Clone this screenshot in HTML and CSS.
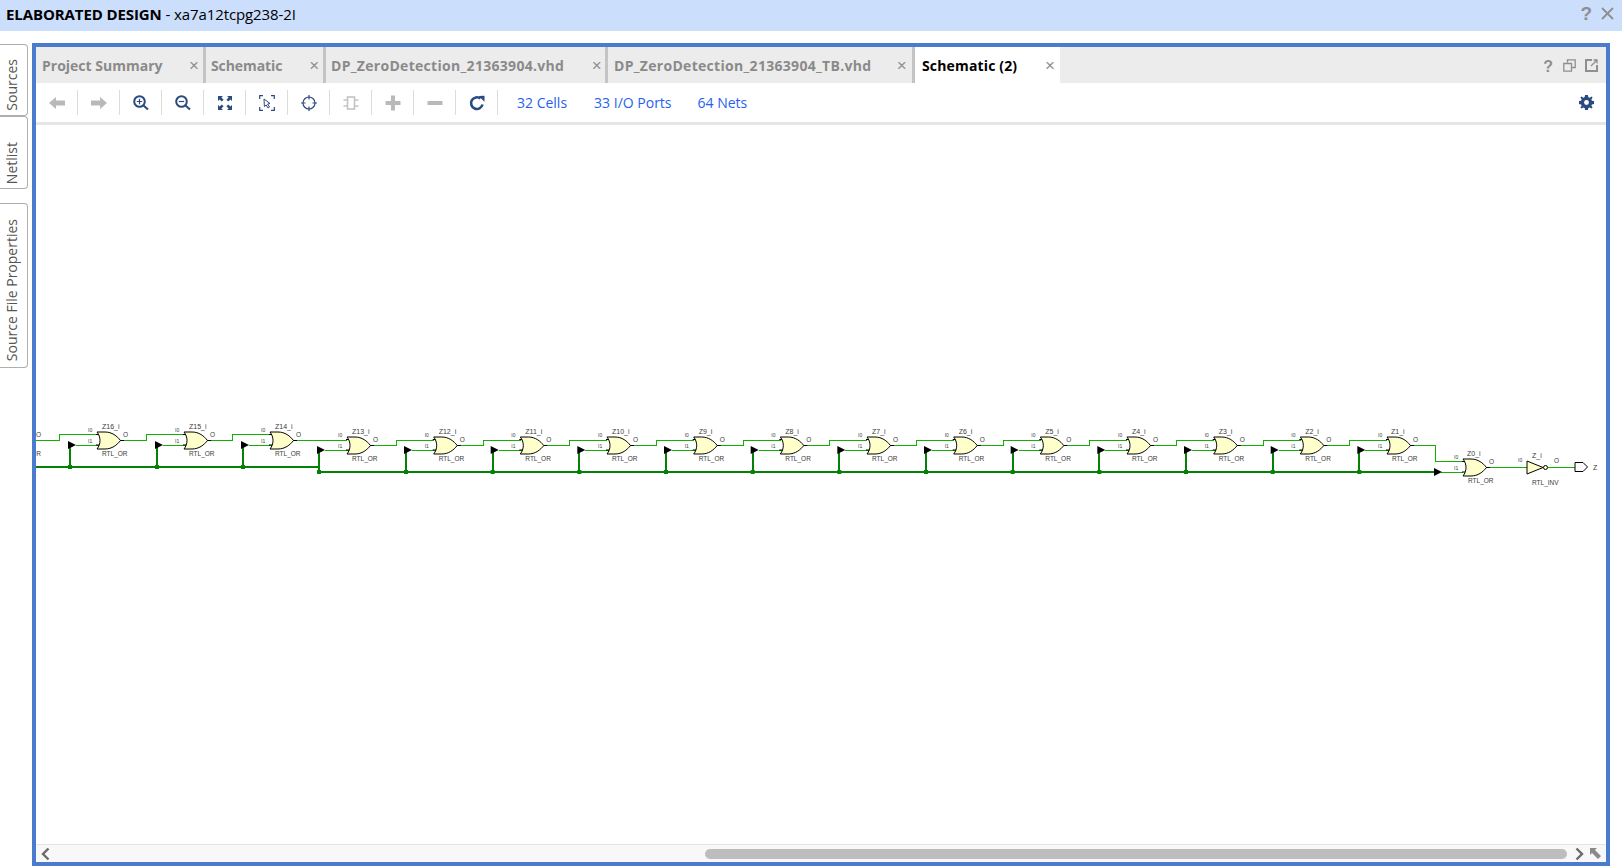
FILE: index.html
```html
<!DOCTYPE html>
<html lang="en">
<head>
<meta charset="utf-8">
<title>Elaborated Design</title>
<link rel="stylesheet" href="styles.css">
</head>
<body>
<svg class="defs" width="0" height="0" aria-hidden="true">
  <defs>
    <g id="orgate">
      <path class="stub" d="M-1 2.5H4M-1 13H4M23 8.5H27"/>
      <path class="gate" d="M0 0H8C15 0 20 4 23.5 8.5C20 13 15 17 8 17H0C4 12 4 5 0 0Z"/>
    </g>
    <g id="tap">
      <path class="bus" d="M0 0V22"/>
      <path class="wire" d="M6 0H30"/>
      <path class="arrow" d="M-2 -4L6 0L-2 4Z"/>
      <rect class="node" x="-2" y="20" width="4" height="4"/>
    </g>
  </defs>
</svg>
<header class="titlebar">
  <div class="title"><b>ELABORATED DESIGN</b> - xa7a12tcpg238-2I</div>
  <div class="title-icons">
    <span class="t-help">?</span>
    <svg width="13" height="13" viewBox="0 0 13 13"><path class="x-big" d="M1 1L12 12M12 1L1 12"/></svg>
  </div>
</header>
<main class="workspace">
  <nav class="side">
    <div class="side-tab st-sources"><span>Sources</span></div>
    <div class="side-tab st-netlist"><span>Netlist</span></div>
    <div class="side-tab st-props"><span>Source File Properties</span></div>
  </nav>
  <section class="panel">
    <div class="tabs">
      <div class="tab t1"><span class="lbl">Project Summary</span><i class="close">×</i></div>
      <div class="tab t2"><span class="lbl">Schematic</span><i class="close">×</i></div>
      <div class="tab t3"><span class="lbl">DP_ZeroDetection_21363904.vhd</span><i class="close">×</i></div>
      <div class="tab t4"><span class="lbl">DP_ZeroDetection_21363904_TB.vhd</span><i class="close">×</i></div>
      <div class="tab active"><span class="lbl">Schematic (2)</span><i class="close">×</i></div>
      <div class="tab-actions">
        <span class="p-help">?</span>
        <svg width="13" height="13" viewBox="0 0 13 13"><path class="ta" d="M4.5 3.5V.8H12.2V8.5H9M.8 4.5H8.5V12.2H.8Z"/></svg>
        <svg width="13" height="13" viewBox="0 0 13 13"><path class="ta2" d="M7 1H1V12H12V6"/><path class="ta" d="M6 7L11.5 1.5M8.5 1H12V4.5"/></svg>
      </div>
    </div>
    <div class="toolbar">
      <button class="tb"><svg width="16" height="14" viewBox="0 0 16 14"><path class="off" d="M0 7L7 1V4.500H16V9.500H7V13Z"/></svg></button>
      <button class="tb"><svg width="16" height="14" viewBox="0 0 16 14"><path class="off" d="M16 7L9 1V4.500H0V9.500H9V13Z"/></svg></button>
      <button class="tb"><svg width="16" height="16" viewBox="0 0 16 16"><circle class="on-s" cx="6.500" cy="6.500" r="5.300"/><path class="on-s thin" d="M3.800 6.500H9.200M6.500 3.800V9.200"/><path class="on-s" d="M10.500 10.500L15 14.500"/></svg></button>
      <button class="tb"><svg width="16" height="16" viewBox="0 0 16 16"><circle class="on-s" cx="6.500" cy="6.500" r="5.300"/><path class="on-s thin" d="M3.800 6.500H9.200"/><path class="on-s" d="M10.500 10.500L15 14.500"/></svg></button>
      <button class="tb"><svg width="16" height="16" viewBox="0 0 16 16"><path class="on" d="M1 1H6L4.400 2.600L6.600 4.800L4.800 6.600L2.600 4.400L1 6ZM15 1V6L13.400 4.400L11.200 6.600L9.400 4.800L11.600 2.600L10 1ZM1 15V10L2.600 11.600L4.800 9.400L6.600 11.200L4.400 13.400L6 15ZM15 15H10L11.600 13.400L9.400 11.200L11.200 9.400L13.400 11.600L15 10Z"/></svg></button>
      <button class="tb"><svg width="16" height="16" viewBox="0 0 16 16"><path class="on-s thin" d="M.7 4V.7H4M12 .7H15.300V4M.7 12V15.300H4M12 15.300H15.300V12"/><path class="cur" d="M5 4L11 8.500L8.600 9L10.500 12L9 13L7.200 10L5.400 11.500Z"/></svg></button>
      <button class="tb"><svg width="16" height="16" viewBox="0 0 16 16"><circle class="on-s thin" cx="8" cy="8" r="6"/><path class="on-s thin" d="M8 0V4.500M8 11.500V16M0 8H4.500M11.500 8H16"/></svg></button>
      <button class="tb"><svg width="16" height="14" viewBox="0 0 16 14"><rect class="off-s" x="4.500" y="1" width="7" height="12"/><path class="off-s" d="M.5 4H4.500M.5 10H4.500M11.500 4H15.500M11.500 10H15.500"/></svg></button>
      <button class="tb"><svg width="16" height="16" viewBox="0 0 16 16"><path class="off" d="M6 0.500H10V6H15.500V10H10V15.500H6V10H.5V6H6Z"/></svg></button>
      <button class="tb"><svg width="16" height="16" viewBox="0 0 16 16"><path class="off" d="M.5 6H15.500V10H.5Z"/></svg></button>
      <button class="tb"><svg width="16" height="16" viewBox="0 0 16 16"><path class="on-r" d="M13.500 9.500A5.800 5.800 0 1 1 11.500 3.600"/><path class="on" d="M9.500 1L15.500 .8V6.800Z"/></svg></button>
      <a class="link l1">32 Cells</a>
      <a class="link l2">33 I/O Ports</a>
      <a class="link l3">64 Nets</a>
      <svg class="gear" width="15" height="15" viewBox="0 0 16 16"><path class="on" fill-rule="evenodd" d="M6.500 0H9.500L10 2.300L11.400 2.900L13.400 1.600L14.500 2.700L13.200 4.700L13.800 6.100L16 6.500V9.500L13.800 10L13.200 11.400L14.500 13.400L13.400 14.500L11.400 13.200L10 13.800L9.500 16H6.500L6 13.800L4.600 13.200L2.600 14.500L1.500 13.400L2.800 11.400L2.200 10L0 9.500V6.500L2.200 6L2.800 4.600L1.500 2.700L2.600 1.600L4.600 2.800L6 2.200ZM8 5.400A2.600 2.600 0 1 0 8 10.600A2.600 2.600 0 1 0 8 5.400Z"/></svg>
    </div>
    <div class="canvas">
      <svg class="schematic" width="1570" height="719" viewBox="36 125 1570 719">
        <path class="wire" d="M36 440H59V434.5H97M120 440H146V434.500H184M206.500 440H232V434.500H270M293 440H347M370 445H396V440H434M457 445H483V440H521M543.500 445H569V440H607M630 445H656V440H694M717 445H743V440H781M803.500 445H829V440H867M890 445H916V440H954M977 445H1003V440H1041M1063.500 445H1089V440H1127M1150 445H1176V440H1214M1237 445H1263V440H1301M1323.500 445H1349V440H1387M1410 445H1435V461H1463M1441 472H1463M1487 467H1527M1548 467H1575"/>
        <path class="bus" d="M36 467H319V472H1436"/>
        <use href="#tap" x="70" y="445"/><use href="#tap" x="157" y="445"/><use href="#tap" x="243" y="445"/>
        <use href="#tap" x="319" y="450"/><use href="#tap" x="406" y="450"/><use href="#tap" x="492.700" y="450"/><use href="#tap" x="579.300" y="450"/><use href="#tap" x="666" y="450"/><use href="#tap" x="752.700" y="450"/><use href="#tap" x="839.300" y="450"/><use href="#tap" x="926" y="450"/><use href="#tap" x="1012.700" y="450"/><use href="#tap" x="1099.300" y="450"/><use href="#tap" x="1186" y="450"/><use href="#tap" x="1272.700" y="450"/><use href="#tap" x="1359.300" y="450"/>
        <path class="arrow" d="M1434 468L1442 472L1434 476Z"/>
        <g class="ltext"><text class="o" x="36" y="437">O</text><text class="rtl" x="15.300" y="456">RTL_OR</text></g>

        <g class="ltext" transform="translate(97 432)"><use href="#orgate"/><text class="nm" x="5" y="-3">Z16_i</text><text class="rtl" x="5" y="24">RTL_OR</text><text class="pin" x="-9" y="0">I0</text><text class="pin" x="-9" y="11">I1</text><text class="o" x="26" y="5">O</text></g>
        <g class="ltext" transform="translate(184 432)"><use href="#orgate"/><text class="nm" x="5" y="-3">Z15_i</text><text class="rtl" x="5" y="24">RTL_OR</text><text class="pin" x="-9" y="0">I0</text><text class="pin" x="-9" y="11">I1</text><text class="o" x="26" y="5">O</text></g>
        <g class="ltext" transform="translate(270 432)"><use href="#orgate"/><text class="nm" x="5" y="-3">Z14_i</text><text class="rtl" x="5" y="24">RTL_OR</text><text class="pin" x="-9" y="0">I0</text><text class="pin" x="-9" y="11">I1</text><text class="o" x="26" y="5">O</text></g>
        <g class="ltext" transform="translate(347 437)"><use href="#orgate"/><text class="nm" x="5" y="-3">Z13_i</text><text class="rtl" x="5" y="24">RTL_OR</text><text class="pin" x="-9" y="0">I0</text><text class="pin" x="-9" y="11">I1</text><text class="o" x="26" y="5">O</text></g>
        <g class="ltext" transform="translate(433.700 437)"><use href="#orgate"/><text class="nm" x="5" y="-3">Z12_i</text><text class="rtl" x="5" y="24">RTL_OR</text><text class="pin" x="-9" y="0">I0</text><text class="pin" x="-9" y="11">I1</text><text class="o" x="26" y="5">O</text></g>
        <g class="ltext" transform="translate(520.300 437)"><use href="#orgate"/><text class="nm" x="5" y="-3">Z11_i</text><text class="rtl" x="5" y="24">RTL_OR</text><text class="pin" x="-9" y="0">I0</text><text class="pin" x="-9" y="11">I1</text><text class="o" x="26" y="5">O</text></g>
        <g class="ltext" transform="translate(607 437)"><use href="#orgate"/><text class="nm" x="5" y="-3">Z10_i</text><text class="rtl" x="5" y="24">RTL_OR</text><text class="pin" x="-9" y="0">I0</text><text class="pin" x="-9" y="11">I1</text><text class="o" x="26" y="5">O</text></g>
        <g class="ltext" transform="translate(693.700 437)"><use href="#orgate"/><text class="nm" x="5" y="-3">Z9_i</text><text class="rtl" x="5" y="24">RTL_OR</text><text class="pin" x="-9" y="0">I0</text><text class="pin" x="-9" y="11">I1</text><text class="o" x="26" y="5">O</text></g>
        <g class="ltext" transform="translate(780.300 437)"><use href="#orgate"/><text class="nm" x="5" y="-3">Z8_i</text><text class="rtl" x="5" y="24">RTL_OR</text><text class="pin" x="-9" y="0">I0</text><text class="pin" x="-9" y="11">I1</text><text class="o" x="26" y="5">O</text></g>
        <g class="ltext" transform="translate(867 437)"><use href="#orgate"/><text class="nm" x="5" y="-3">Z7_i</text><text class="rtl" x="5" y="24">RTL_OR</text><text class="pin" x="-9" y="0">I0</text><text class="pin" x="-9" y="11">I1</text><text class="o" x="26" y="5">O</text></g>
        <g class="ltext" transform="translate(953.700 437)"><use href="#orgate"/><text class="nm" x="5" y="-3">Z6_i</text><text class="rtl" x="5" y="24">RTL_OR</text><text class="pin" x="-9" y="0">I0</text><text class="pin" x="-9" y="11">I1</text><text class="o" x="26" y="5">O</text></g>
        <g class="ltext" transform="translate(1040.300 437)"><use href="#orgate"/><text class="nm" x="5" y="-3">Z5_i</text><text class="rtl" x="5" y="24">RTL_OR</text><text class="pin" x="-9" y="0">I0</text><text class="pin" x="-9" y="11">I1</text><text class="o" x="26" y="5">O</text></g>
        <g class="ltext" transform="translate(1127 437)"><use href="#orgate"/><text class="nm" x="5" y="-3">Z4_i</text><text class="rtl" x="5" y="24">RTL_OR</text><text class="pin" x="-9" y="0">I0</text><text class="pin" x="-9" y="11">I1</text><text class="o" x="26" y="5">O</text></g>
        <g class="ltext" transform="translate(1213.700 437)"><use href="#orgate"/><text class="nm" x="5" y="-3">Z3_i</text><text class="rtl" x="5" y="24">RTL_OR</text><text class="pin" x="-9" y="0">I0</text><text class="pin" x="-9" y="11">I1</text><text class="o" x="26" y="5">O</text></g>
        <g class="ltext" transform="translate(1300.300 437)"><use href="#orgate"/><text class="nm" x="5" y="-3">Z2_i</text><text class="rtl" x="5" y="24">RTL_OR</text><text class="pin" x="-9" y="0">I0</text><text class="pin" x="-9" y="11">I1</text><text class="o" x="26" y="5">O</text></g>
        <g class="ltext" transform="translate(1387 437)"><use href="#orgate"/><text class="nm" x="4" y="-3">Z1_i</text><text class="rtl" x="5" y="24">RTL_OR</text><text class="pin" x="-9" y="0">I0</text><text class="pin" x="-9" y="11">I1</text><text class="o" x="26" y="5">O</text></g>
        <g class="ltext" transform="translate(1463 459)"><use href="#orgate"/><text class="nm" x="4" y="-3">Z0_i</text><text class="rtl" x="5" y="24">RTL_OR</text><text class="pin" x="-9" y="0">I0</text><text class="pin" x="-9" y="11">I1</text><text class="o" x="26" y="5">O</text></g>
        <g class="ltext" transform="translate(1527 461)">
          <path class="gate" d="M0 0L16 6.500L0 13Z"/><circle class="gate" cx="18.500" cy="6.500" r="2"/>
          <text class="nm" x="5" y="-3">Z_i</text><text class="rtl" x="5" y="24">RTL_INV</text><text class="pin" x="-9" y="1">I0</text><text class="o" x="27" y="2">O</text>
        </g>
        <path class="port" d="M1575 462.500H1583L1587.500 467L1583 471.500H1575Z"/>
        <text class="ltext nm" x="1593" y="470">Z</text>
      </svg>
    </div>
    <div class="hscroll">
      <svg class="arrow-l" width="9" height="14" viewBox="0 0 9 14"><path class="sc" d="M7.500 1.500L2 7L7.500 12.500"/></svg>
      <div class="track"><div class="thumb"></div></div>
      <svg class="arrow-r" width="9" height="14" viewBox="0 0 9 14"><path class="sc" d="M1.500 1.500L7 7L1.500 12.500"/></svg>
      <svg class="corner" width="11" height="11" viewBox="0 0 11 11"><path class="cn" d="M0 0H7L5 2L11 8L8 11L2 5L0 7Z"/></svg>
    </div>
  </section>
</main>
</body>
</html>
```
FILE: styles.css
```css
* { box-sizing: border-box; }
html, body { margin: 0; height: 100%; overflow: hidden; background: #fff; }
body {
  display: flex;
  flex-direction: column;
  height: 866px;
  font-family: "Open Sans", "Noto Sans", sans-serif;
  color: #000;
}
.defs { position: absolute; }

/* title bar */
.titlebar {
  height: 31px;
  flex: none;
  background: #cbdefc;
  display: flex;
  align-items: center;
  justify-content: space-between;
  padding: 0 8px 4px 6px;
}
.title { font-size: 15px; letter-spacing: -0.1px; }
.title b { font-weight: 700; }
.title-icons { display: flex; align-items: center; gap: 9px; }
.t-help { font: 700 19px/1 "Liberation Sans", sans-serif; color: #8f8f8f; }
.x-big { stroke: #8f8f8f; stroke-width: 1.8; fill: none; }

/* layout */
.workspace { flex: 1; display: flex; padding-top: 12px; min-height: 0; }
.side { width: 32px; flex: none; display: flex; flex-direction: column; padding-top: 1px; }
.side-tab {
  width: 28px;
  border: 1px solid #aeaeae;
  border-left: 0;
  border-radius: 0 4px 4px 0;
  background: #fff;
  display: flex;
  justify-content: center;
  font-size: 14px;
  color: #555;
}
.side-tab span { writing-mode: vertical-rl; transform: rotate(180deg); white-space: nowrap; }
.st-sources { height: 72px; align-items: flex-end; padding: 0 4px 4px 0; }
.st-netlist { height: 73px; align-items: flex-end; padding: 0 4px 4px 0; }
.st-props { height: 165px; margin-top: 14px; align-items: flex-end; padding: 0 4px 6px 0; }

.panel {
  width: 1578px;
  border: 4px solid #4a7bcd;
  display: flex;
  flex-direction: column;
  min-height: 0;
}

/* tabs */
.tabs { height: 36px; flex: none; display: flex; background: #ececec; align-items: stretch; }
.tab {
  display: flex;
  align-items: center;
  justify-content: space-between;
  border-right: 3px solid #c4c4c4;
  font-size: 14px;
  font-weight: 700;
  color: #8a8a8a;
  white-space: nowrap;
}
.lbl { display: block; }
.close { font: 400 17px/1 "Liberation Sans", sans-serif; color: #8f8f8f; }
.t1 { width: 170px; padding: 0 4px 0 6px; }
.t2 { width: 120px; padding: 0 4px 0 5px; letter-spacing: -0.1px; }
.t3 { width: 282px; padding: 0 3px 0 5px; letter-spacing: 0.3px; }
.t4 { width: 307px; padding: 0 5px 0 6px; letter-spacing: 0.3px; }
.active { width: 145px; padding: 0 5px 0 7px; background: #fff; color: #000; border-right: 0; letter-spacing: 0.15px; }
.tab-actions { margin-left: auto; display: flex; align-items: center; gap: 9px; padding-right: 8px; }
.p-help { font: 700 16px/1 "Liberation Sans", sans-serif; color: #8f8f8f; padding-top: 4px; margin-right: 1px; }
.ta { stroke: #8f8f8f; stroke-width: 1.3; fill: none; }
.ta2 { stroke: #8f8f8f; stroke-width: 2; fill: none; }

/* toolbar */
.toolbar {
  height: 42px;
  flex: none;
  display: flex;
  align-items: center;
  border-bottom: 3px solid #e6e6e6;
}
.tb {
  width: 42px;
  height: 25px;
  flex: none;
  padding: 0;
  background: none;
  border: 0;
  border-right: 1px solid #dcdcdc;
  display: flex;
  align-items: center;
  justify-content: center;
}
.off { fill: #b9b9b9; }
.off-s { fill: none; stroke: #c4c4c4; stroke-width: 1.6; }
.on { fill: #2b4a80; }
.on-s { fill: none; stroke: #2b4a80; stroke-width: 2; }
.on-s.thin { stroke-width: 1.2; }
.on-r { fill: none; stroke: #2b4a80; stroke-width: 2.6; }
.cur { fill: #fff; stroke: #2b4a80; stroke-width: 1; }
.link { font-size: 14px; color: #1f62f0; white-space: nowrap; }
.l1 { margin-left: 19px; }
.l2 { margin-left: 27px; }
.l3 { margin-left: 26px; }
.gear { margin-left: auto; margin-right: 12px; }

/* schematic */
.canvas { flex: 1; min-height: 0; background: #fff; overflow: hidden; }
.schematic { display: block; }
.wire { fill: none; stroke: #10b000; stroke-width: 1; shape-rendering: crispEdges; }
.bus { fill: none; stroke: #078007; stroke-width: 2; shape-rendering: crispEdges; }
.node { fill: #078007; }
.arrow { fill: #000; }
.stub { fill: none; stroke: #000; stroke-width: 1; }
.gate { fill: #ffffcc; stroke: #000; stroke-width: 1; }
.port { fill: #fff; stroke: #000; stroke-width: 1; }
.ltext { font-family: "Liberation Sans", sans-serif; fill: #3a3a3a; }
.nm { font-size: 7px; }
.rtl { font-size: 6.5px; }
.pin { font-size: 5px; }
.o { font-size: 6.5px; }

/* scrollbar */
.hscroll {
  height: 18px;
  flex: none;
  display: flex;
  align-items: center;
  background: #f8f8f8;
  border-top: 1px solid #e4e4e4;
  padding: 0 5px;
}
.track { flex: 1; height: 10px; margin-right: 1px; display: flex; justify-content: flex-end; }
.thumb { width: 862px; height: 10px; background: #bdbdbd; border-radius: 5px; }
.arrow-r { margin: 0 6px 0 7px; }
.sc { fill: none; stroke: #6a6a6a; stroke-width: 2.4; }
.cn { fill: #8a8a8a; }
```
